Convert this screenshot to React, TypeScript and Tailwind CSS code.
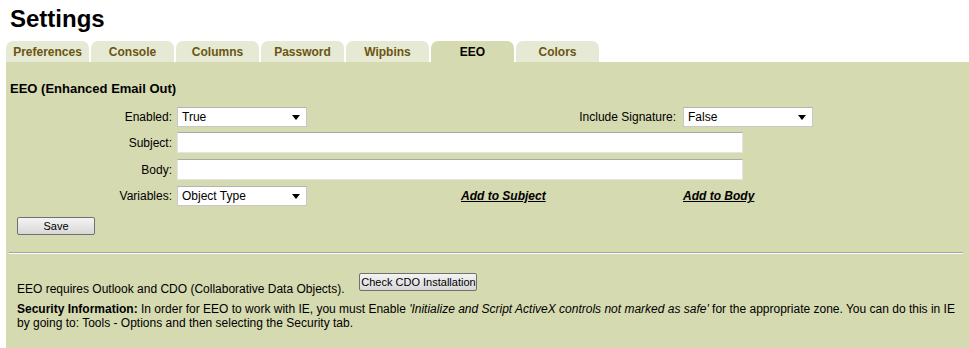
const tabs = ["Preferences", "Console", "Columns", "Password", "Wipbins", "EEO", "Colors"];

function Select({ value }: { value: string }) {
  return (
    <div className="flex h-[20px] w-[130px] items-center justify-between border border-[#c8c8c8] border-t-[#b4b4b4] bg-white pl-[4px] pr-[6px]">
      <span>{value}</span>
      <svg width="8" height="5" viewBox="0 0 8 5">
        <path d="M0 0h8L4 5z" fill="#000" />
      </svg>
    </div>
  );
}

function TextBox() {
  return <div className="h-[21px] w-[566px] border border-[#e4e4e4] border-t-[#a9a9a9] bg-white" />;
}

export default function App() {
  return (
    <div className="h-[348px] w-[969px] bg-white font-['Liberation_Sans',Arial,sans-serif] text-[12px] text-black">
      <h1 className="pl-[10px] pt-[5px] text-[24px] font-bold leading-[28px]">Settings</h1>

      {/* tab strip */}
      <div className="mt-[8px] flex gap-[2px] pl-[6px]">
        {tabs.map((t) => (
          <div
            key={t}
            className={
              t === "EEO"
                ? "flex h-[21px] w-[83px] items-center justify-center rounded-t-[7px] bg-[#d5dab0] font-bold text-black"
                : "flex h-[21px] w-[83px] items-center justify-center rounded-t-[7px] bg-[#e6e9d4] font-bold text-[#6a5510]"
            }
          >
            {t}
          </div>
        ))}
      </div>

      {/* panel */}
      <div className="ml-[6px] h-[286px] bg-[#d5dab0] pt-[19px]">
        <div className="pl-[4px] text-[13px] font-bold leading-[16px]">EEO (Enhanced Email Out)</div>

        <div className="mt-[10px] flex flex-col gap-[5px] leading-[14px]">
          <div className="flex items-center">
            <div className="w-[171px] pr-[5px] text-right">Enabled:</div>
            <Select value="True" />
            <div className="w-[376px] pr-[7px] text-right">Include Signature:</div>
            <Select value="False" />
          </div>
          <div className="flex items-center">
            <div className="w-[171px] pr-[5px] text-right">Subject:</div>
            <TextBox />
          </div>
          <div className="mt-[1px] flex items-center">
            <div className="w-[171px] pr-[5px] text-right">Body:</div>
            <TextBox />
          </div>
          <div className="mt-[1px] flex items-center">
            <div className="w-[171px] pr-[5px] text-right">Variables:</div>
            <Select value="Object Type" />
            <div className="w-[376px] pl-[154px]">
              <span className="font-bold italic underline">Add to Subject</span>
            </div>
            <span className="font-bold italic underline">Add to Body</span>
          </div>
        </div>

        <button className="ml-[11px] mt-[11px] h-[18px] w-[78px] rounded-[2px] border border-[#707070] bg-gradient-to-b from-[#f4f4f4] to-[#d8d8d8] text-[11px] leading-[14px]">
          Save
        </button>

        <div className="ml-[3px] mr-[6px] mt-[17px] border-t border-b border-t-[#a3a3a3] border-b-white" />

        <div className="mt-[19px] flex items-end pl-[11px] leading-[14px]">
          <span className="mb-[-1px]">EEO requires Outlook and CDO (Collaborative Data Objects).</span>
          <button className="ml-[15px] mb-[4px] h-[18px] w-[118px] rounded-[2px] border border-[#707070] bg-gradient-to-b from-[#f4f4f4] to-[#d8d8d8] text-[11px] leading-[14px]">
            Check CDO Installation
          </button>
        </div>
        <p className="mt-[7px] w-[955px] pl-[11px] leading-[14px]">
          <b>Security Information:</b> In order for EEO to work with IE, you must Enable{" "}
          <i>'Initialize and Script ActiveX controls not marked as safe'</i> for the appropriate zone. You can do this in IE
          by going to: Tools - Options and then selecting the Security tab.
        </p>
      </div>
    </div>
  );
}
